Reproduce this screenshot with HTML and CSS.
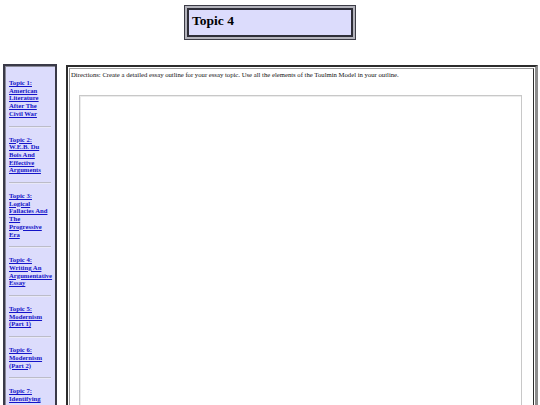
FILE: index.html
```html
<!DOCTYPE html>
<html>
<head>
<meta charset="utf-8">
<link rel="stylesheet" href="styles.css">
</head>
<body>
<div class="header-wrap">
  <div class="header-outer">
    <div class="header-inner">Topic 4</div>
  </div>
</div>
<div class="layout">
  <div class="sidebar">
    <a class="topic" href="#">Topic 1: American Literature After The Civil War</a>
    <hr class="sep">
    <a class="topic" href="#">Topic 2: W.E.B. Du Bois And Effective Arguments</a>
    <hr class="sep">
    <a class="topic" href="#">Topic 3: Logical Fallacies And The Progressive Era</a>
    <hr class="sep">
    <a class="topic" href="#">Topic 4: Writing An Argumentative Essay</a>
    <hr class="sep">
    <a class="topic" href="#">Topic 5: Modernism (Part 1)</a>
    <hr class="sep">
    <a class="topic" href="#">Topic 6: Modernism (Part 2)</a>
    <hr class="sep">
    <a class="topic" href="#">Topic 7: Identifying Rhetorical Devices</a>
    <hr class="sep">
    <a class="topic" href="#">Topic 8: The Harlem Renaissance</a>
  </div>
  <div class="main">
    <div class="main-inner">
      <div class="directions">Directions: Create a detailed essay outline for your essay topic. Use all the elements of the Toulmin Model in your outline.</div>
      <div class="answer"></div>
    </div>
  </div>
</div>
</body>
</html>
```
FILE: styles.css
```css
html, body {
  margin: 0;
  padding: 0;
  background: #ffffff;
  font-family: "Liberation Serif", "Times New Roman", serif;
  overflow: hidden;
  height: 405px;
}

.header-wrap {
  display: flex;
  justify-content: center;
  padding-top: 5px;
}

.header-outer {
  width: 166px;
  border: 1px solid #3c3c46;
  padding: 2px;
  background: #b4b4bc;
}

.header-inner {
  border: 2px solid #2e2e38;
  background: #dcdcfc;
  font-weight: bold;
  font-size: 13.5px;
  line-height: 15px;
  padding: 3px 3px 7px 3px;
  color: #000;
}

.layout {
  display: flex;
  align-items: flex-start;
  gap: 9px;
  margin-top: 24px;
  padding-left: 3px;
}

.sidebar {
  width: 42px;
  flex: none;
  border: 2px solid #3a3a48;
  box-shadow: inset 1px 1px 0 #8a8a98;
  background: #dcdcfc;
  padding: 13px 4px 20px 4px;
  display: flex;
  flex-direction: column;
  font-size: 6.7px;
  line-height: 7.7px;
  min-height: 400px;
}

.topic {
  color: #1414c8;
  font-weight: bold;
  text-decoration: underline;
}

.sep {
  border: none;
  border-top: 1px solid #bcbcc8;
  border-bottom: 1px solid #e8e8f8;
  margin: 8px 0 8px 0;
  height: 0;
}

.main {
  margin-top: 1px;
  width: 465px;
  flex: none;
  border-style: solid;
  border-width: 2px 3px 2px 2px;
  border-color: #2c2c2c #8c8c8c #8c8c8c #2c2c2c;
  padding: 1px;
}

.main-inner {
  border: 1px solid;
  border-color: #9a9a9a #2c2c2c #2c2c2c #9a9a9a;
  padding: 2px 1px;
  min-height: 400px;
}

.directions {
  font-size: 6.7px;
  line-height: 7.7px;
  color: #111;
}

.answer {
  margin: 16px 10px 0 8px;
  height: 400px;
  border: 1px solid #c8c8c8;
  box-shadow: inset 1px 1px 0 #ececec;
  background: #fff;
}
```
